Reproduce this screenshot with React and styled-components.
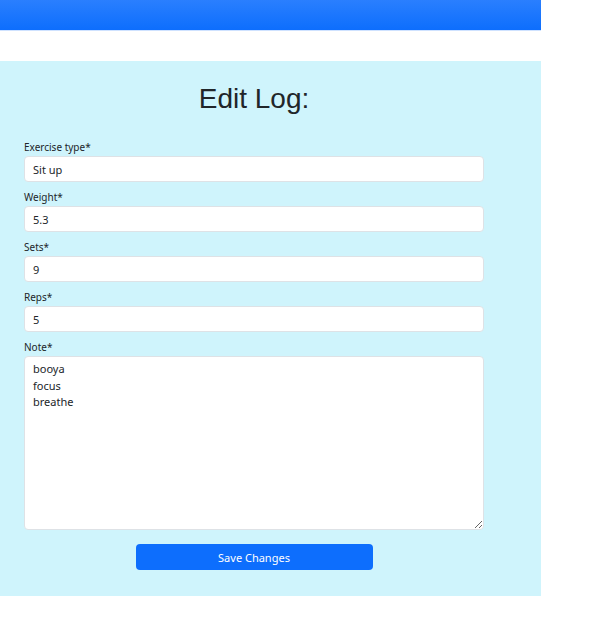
import React from 'react';
import styled, { createGlobalStyle } from 'styled-components';

const Global = createGlobalStyle`
  body {
    margin: 0;
    background: #fff;
    font-family: "Noto Sans", "Open Sans", sans-serif;
  }
`;

const Page = styled.div`
  width: 541px;
`;

const TopBar = styled.div`
  height: 30px;
  background: linear-gradient(180deg, #2a7ffe 0%, #0d6efd 100%);
  border-bottom: 1px solid #cfe2ff;
`;

const Spacer = styled.div`
  height: 30px;
`;

const Panel = styled.div`
  background: #cff4fc;
  padding: 22px 57px 26px 24px;
`;

const Form = styled.form`
  width: 460px;
  display: flex;
  flex-direction: column;
`;

const Title = styled.h1`
  margin: 0 0 25px;
  text-align: center;
  font-family: "Liberation Sans", Arial, sans-serif;
  font-weight: 400;
  font-size: 28px;
  line-height: 32px;
  color: #212529;
`;

const Field = styled.div`
  display: flex;
  flex-direction: column;
  margin-bottom: 8px;
`;

const Label = styled.label`
  font-size: 10px;
  line-height: 14px;
  color: #212529;
  margin-bottom: 2px;
`;

const Input = styled.input`
  box-sizing: border-box;
  height: 26px;
  padding: 0 8px;
  border: 1px solid #dee2e6;
  border-radius: 4px;
  background: #fff;
  font-family: inherit;
  font-size: 11px;
  color: #212529;
  outline: none;
`;

const TextArea = styled.textarea`
  box-sizing: border-box;
  height: 174px;
  padding: 4px 8px;
  border: 1px solid #dee2e6;
  border-radius: 4px;
  background: #fff;
  font-family: inherit;
  font-size: 11px;
  line-height: 16.5px;
  color: #212529;
  outline: none;
  resize: vertical;
`;

const Button = styled.button`
  align-self: center;
  margin-top: 6px;
  width: 237px;
  height: 26px;
  border: none;
  border-radius: 4px;
  background: #0d6efd;
  color: #fff;
  font-family: inherit;
  font-size: 11px;
  cursor: pointer;
`;

const fields = [
  { label: 'Exercise type*', value: 'Sit up' },
  { label: 'Weight*', value: '5.3' },
  { label: 'Sets*', value: '9' },
  { label: 'Reps*', value: '5' },
];

export default function App() {
  return (
    <Page>
      <Global />
      <TopBar />
      <Spacer />
      <Panel>
        <Form onSubmit={(e) => e.preventDefault()}>
          <Title>Edit Log:</Title>
          {fields.map((f) => (
            <Field key={f.label}>
              <Label>{f.label}</Label>
              <Input defaultValue={f.value} />
            </Field>
          ))}
          <Field>
            <Label>Note*</Label>
            <TextArea defaultValue={'booya\nfocus\nbreathe'} />
          </Field>
          <Button type="submit">Save Changes</Button>
        </Form>
      </Panel>
    </Page>
  );
}
